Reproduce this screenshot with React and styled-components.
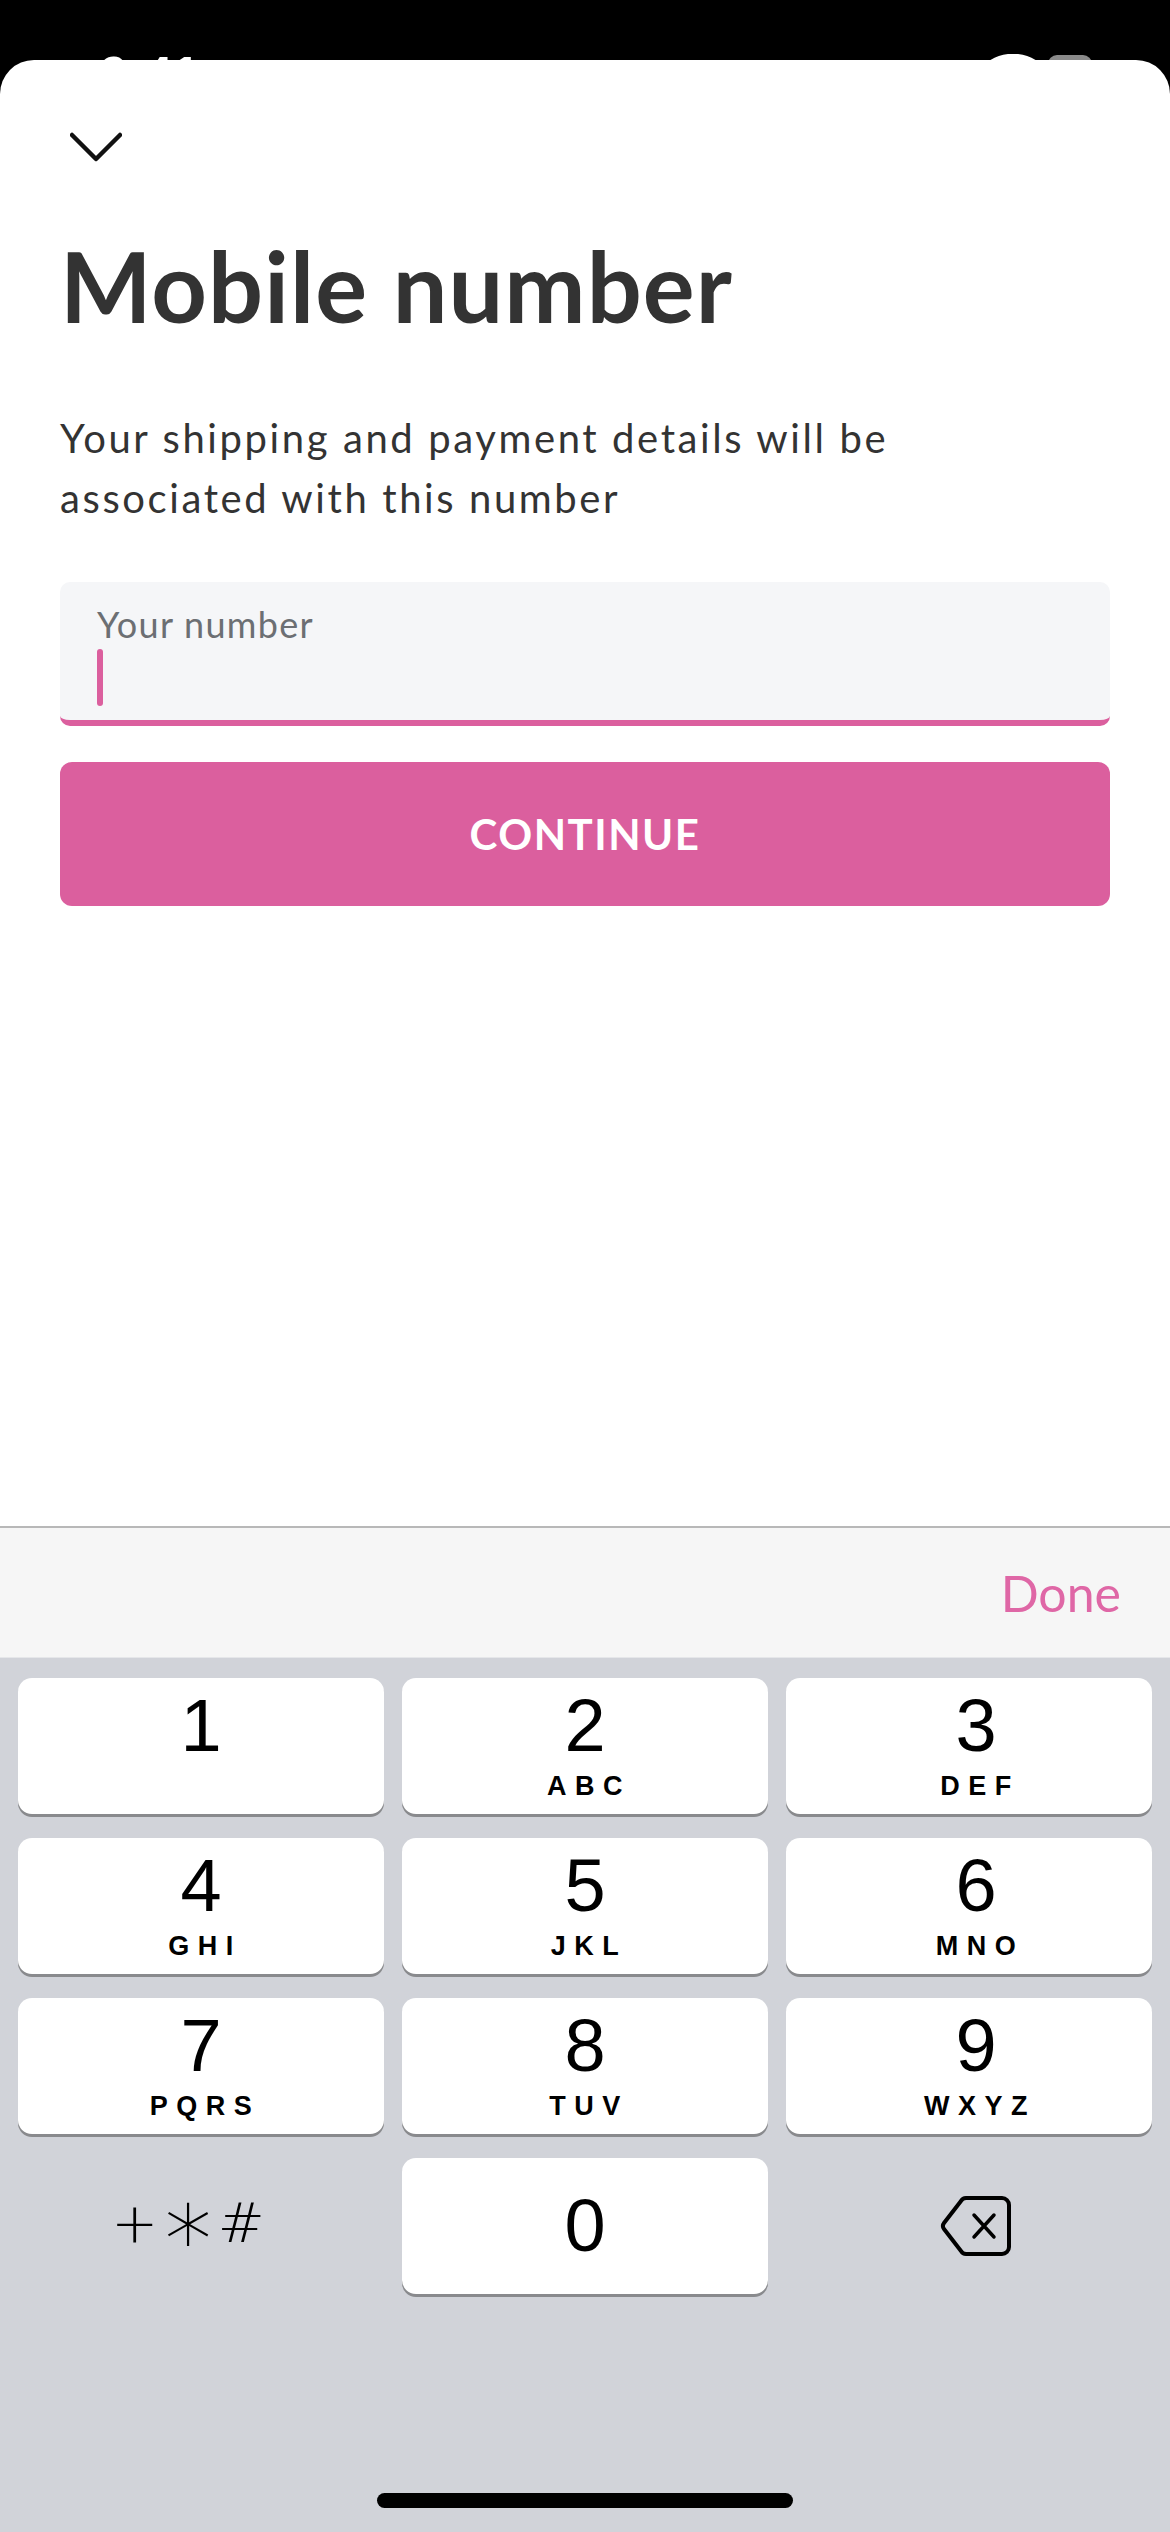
import styled, { createGlobalStyle } from "styled-components";

const GlobalStyle = createGlobalStyle`
  * { box-sizing: border-box; }
  body {
    margin: 0;
    background: #000;
    font-family: "Lato", "Noto Sans", sans-serif;
  }
`;

const PINK = "#db5f9e";

const Screen = styled.div`
  width: 1170px;
  height: 2532px;
  display: flex;
  flex-direction: column;
  background: #000;
  overflow: hidden;
`;

const StatusBar = styled.div`
  height: 60px;
  flex-shrink: 0;
  display: flex;
  justify-content: space-between;
  padding: 0 66px 0 100px;
  overflow: hidden;
`;

const Time = styled.span`
  padding-top: 50px;
  font-family: "Liberation Sans", Arial, sans-serif;
  font-weight: 700;
  font-size: 50px;
  line-height: 50px;
  color: #fff;
`;

const StatusIcons = styled.svg`
  margin-top: 54px;
  flex-shrink: 0;
`;

const Sheet = styled.div`
  flex: 1;
  display: flex;
  flex-direction: column;
  background: #fff;
  border-radius: 34px 34px 0 0;
`;

const Content = styled.div`
  flex: 1;
  padding: 0 60px;
  display: flex;
  flex-direction: column;
`;

const CloseButton = styled.button`
  align-self: flex-start;
  margin: 72px 0 0 10px;
  padding: 0;
  border: 0;
  background: none;
  display: flex;
`;

const Title = styled.h1`
  margin: 66px 0 0;
  font-size: 97px;
  line-height: 116px;
  font-weight: 700;
  color: #333;
  letter-spacing: 1.1px;
`;

const Subtitle = styled.p`
  margin: 64px 0 0;
  font-size: 40px;
  line-height: 60px;
  color: #333;
  letter-spacing: 2.6px;
`;

const Field = styled.div`
  margin-top: 54px;
  height: 144px;
  padding: 21px 37px 0;
  background: #f5f6f8;
  border-bottom: 6px solid ${PINK};
  border-radius: 10px;
`;

const FieldLabel = styled.div`
  font-size: 36px;
  line-height: 43px;
  color: #6c6f73;
  letter-spacing: 1.3px;
`;

const Caret = styled.div`
  margin-top: 3px;
  width: 6px;
  height: 57px;
  border-radius: 3px;
  background: ${PINK};
`;

const PrimaryButton = styled.button`
  margin-top: 36px;
  height: 144px;
  border: 0;
  border-radius: 12px;
  background: ${PINK};
  color: #fff;
  font-family: "Lato", sans-serif;
  font-weight: 700;
  font-size: 42px;
  letter-spacing: 1.5px;
`;

const AccessoryBar = styled.div`
  height: 131px;
  flex-shrink: 0;
  display: flex;
  align-items: center;
  justify-content: flex-end;
  padding-right: 49px;
  background: #f6f6f6;
  border-top: 2px solid #b8b8b8;
`;

const DoneButton = styled.button`
  border: 0;
  padding: 0;
  background: none;
  font-family: "Lato", sans-serif;
  font-size: 50px;
  color: #df67a6;
`;

const Keypad = styled.div`
  height: 875px;
  flex-shrink: 0;
  display: flex;
  flex-direction: column;
  padding: 20px 18px 24px;
  background: #d1d3d9;
  border-top: 1px solid #e6e7ea;
`;

const KeyGrid = styled.div`
  display: grid;
  grid-template-columns: repeat(3, 1fr);
  grid-auto-rows: 136px;
  column-gap: 18px;
  row-gap: 24px;
`;

const Key = styled.div`
  display: flex;
  flex-direction: column;
  align-items: center;
  justify-content: ${(p) => (p.$center ? "center" : "flex-start")};
  padding-top: ${(p) => (p.$center ? "0" : "11px")};
  padding-left: ${(p) => Math.max(p.$shift || 0, 0)}px;
  padding-right: ${(p) => Math.max(-(p.$shift || 0), 0)}px;
  border-radius: 14px;
  background: ${(p) => (p.$flat ? "transparent" : "#fff")};
  box-shadow: ${(p) => (p.$flat ? "none" : "0 3px 0 #898a8d")};
  color: #000;
`;

const Digit = styled.span`
  font-family: "Liberation Sans", Arial, sans-serif;
  font-size: 74px;
  line-height: 74px;
`;

const Letters = styled.span`
  margin-top: 10px;
  padding-left: 8px;
  font-family: "Liberation Sans", Arial, sans-serif;
  font-weight: 700;
  font-size: 27px;
  line-height: 27px;
  letter-spacing: 8.5px;
`;

const Symbols = styled.span`
  margin-top: -10px;
  font-family: "DejaVu Sans", sans-serif;
  font-weight: 200;
  font-size: 56px;
  line-height: 1;
  white-space: nowrap;
`;

const Glyph = styled.span`
  font-size: ${(p) => p.$size || 56}px;
  letter-spacing: ${(p) => p.$tight || 0}px;
  vertical-align: ${(p) => p.$drop || 0}px;
`;

const HomeIndicator = styled.div`
  margin: auto auto 0;
  width: 416px;
  height: 15px;
  border-radius: 8px;
  background: #000;
`;

const keys = [
  ["1", ""],
  ["2", "ABC"],
  ["3", "DEF"],
  ["4", "GHI"],
  ["5", "JKL"],
  ["6", "MNO"],
  ["7", "PQRS"],
  ["8", "TUV"],
  ["9", "WXYZ"],
];

function Chevron() {
  return (
    <svg width="52" height="30" viewBox="0 0 52 30" fill="none">
      <path
        d="M2 3 L26 27 L50 3"
        stroke="#111"
        strokeWidth="4.5"
        strokeLinecap="round"
        strokeLinejoin="round"
      />
    </svg>
  );
}

function BackspaceIcon() {
  return (
    <svg width="72" height="62" viewBox="0 0 72 62" fill="none">
      <path
        d="M26 3 H62 a7 7 0 0 1 7 7 V52 a7 7 0 0 1 -7 7 H26 a6 6 0 0 1 -5 -3 L4 34 a5 5 0 0 1 0 -6 L21 6 a6 6 0 0 1 5 -3 Z"
        stroke="#000"
        strokeWidth="4"
        strokeLinejoin="round"
      />
      <path
        d="M34 20 L54 42 M54 20 L34 42"
        stroke="#000"
        strokeWidth="3.5"
        strokeLinecap="round"
      />
    </svg>
  );
}

export default function App() {
  return (
    <>
      <GlobalStyle />
      <Screen>
        <StatusBar>
          <Time>9:41</Time>
          <StatusIcons width="160" height="40" viewBox="0 0 160 40">
            <rect x="0" y="14" width="8" height="20" rx="2" fill="#fff" />
            <rect x="12" y="8" width="8" height="26" rx="2" fill="#fff" />
            <path d="M44 12 a40 40 0 0 1 50 0" stroke="#fff" strokeWidth="7" fill="none" strokeLinecap="round" />
            <rect x="104" y="1" width="44" height="30" rx="9" fill="#8a8a8a" />
          </StatusIcons>
        </StatusBar>
        <Sheet>
          <Content>
            <CloseButton aria-label="Close">
              <Chevron />
            </CloseButton>
            <Title>Mobile number</Title>
            <Subtitle>
              Your shipping and payment details will be
              <br />
              associated with this number
            </Subtitle>
            <Field>
              <FieldLabel>Your number</FieldLabel>
              <Caret />
            </Field>
            <PrimaryButton type="button">CONTINUE</PrimaryButton>
          </Content>
          <AccessoryBar>
            <DoneButton type="button">Done</DoneButton>
          </AccessoryBar>
          <Keypad>
            <KeyGrid>
              {keys.map(([d, l], i) => (
                <Key key={d} $shift={i % 3 === 2 ? 14 : 0}>
                  <Digit>{d}</Digit>
                  {l && <Letters>{l}</Letters>}
                </Key>
              ))}
              <Key $flat $center $shift={-26}>
                <Symbols>
                  <Glyph $tight={0}>+</Glyph>
                  <Glyph $size={95} $tight={0} $drop={-12}>∗</Glyph>
                  <Glyph>#</Glyph>
                </Symbols>
              </Key>
              <Key $center>
                <Digit>0</Digit>
              </Key>
              <Key $flat $center $shift={14}>
                <BackspaceIcon />
              </Key>
            </KeyGrid>
            <HomeIndicator />
          </Keypad>
        </Sheet>
      </Screen>
    </>
  );
}
